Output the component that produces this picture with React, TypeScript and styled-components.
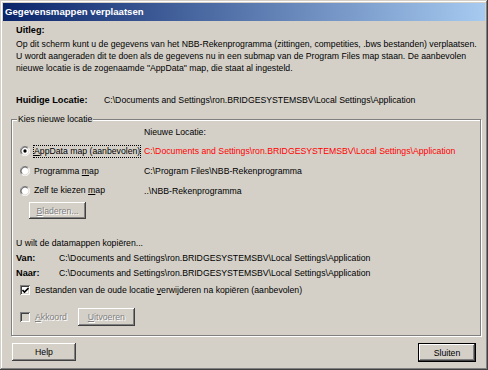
import styled, { createGlobalStyle, css } from 'styled-components'

const GlobalStyle = createGlobalStyle`
  html, body { margin: 0; padding: 0; background: #d4d0c8; }
  body {
    font-family: "Liberation Sans", Arial, sans-serif;
    font-size: 8.7px;
    color: #000;
  }
  u { text-decoration-thickness: 1px; text-underline-offset: 1px; }
`

const PATH = 'C:\\Documents and Settings\\ron.BRIDGESYSTEMSBV\\Local Settings\\Application'

const raised = css`
  box-shadow: inset -1px -1px #404040, inset 1px 1px #ffffff, inset -2px -2px #808080,
    inset 2px 2px #d4d0c8;
`

const sunken = css`
  box-shadow: inset 1px 1px #808080, inset -1px -1px #ffffff, inset 2px 2px #404040,
    inset -2px -2px #d4d0c8;
`

const Window = styled.div`
  width: 488px;
  height: 370px;
  box-sizing: border-box;
  padding: 3px;
  display: flex;
  flex-direction: column;
  background: #d4d0c8;
  box-shadow: inset -1px -1px #404040, inset 1px 1px #d4d0c8, inset -2px -2px #808080,
    inset 2px 2px #ffffff;
`

const TitleBar = styled.div`
  height: 18px;
  line-height: 18px;
  padding-left: 2px;
  background: linear-gradient(to right, #0a246a, #a6caf0);
  color: #fff;
  font-weight: bold;
  font-size: 9.6px;
  white-space: nowrap;
`

const Body = styled.div`
  display: flex;
  flex-direction: column;
  padding-top: 3px;
`

const Heading = styled.div`
  margin-left: 13px;
  line-height: 12px;
  font-weight: bold;
  font-size: 9.2px;
`

const Paragraph = styled.div`
  margin: 2px 0 0 13px;
`

const Line = styled.div`
  line-height: 12px;
  white-space: nowrap;
`

const InfoRow = styled.div<{ $label: number; $top: number; $indent: number }>`
  display: grid;
  grid-template-columns: ${(p) => p.$label}px auto;
  margin: ${(p) => p.$top}px 0 0 ${(p) => p.$indent}px;
  line-height: 12px;
  white-space: nowrap;
`

const Label = styled.span`
  font-weight: bold;
  font-size: 9.2px;
`

const Group = styled.div`
  position: relative;
  margin: 13px 4px 0 8px;
  padding: 6px 0 9px 0;
  border: 1px solid #808080;
  box-shadow: inset 1px 1px #ffffff, 1px 1px #ffffff;
`

const Legend = styled.span`
  position: absolute;
  top: -7px;
  left: 5px;
  padding: 0 1px;
  line-height: 12px;
  background: #d4d0c8;
`

const ColumnHead = styled.div`
  padding-left: 132px;
  line-height: 12px;
  margin-bottom: 3px;
`

const OptionRow = styled.div<{ $h: number }>`
  display: grid;
  grid-template-columns: 132px auto;
  align-items: center;
  height: ${(p) => p.$h}px;
  white-space: nowrap;
`

const OptionCell = styled.div`
  display: flex;
  align-items: center;
  padding-left: 8px;
  gap: 3px;

  svg {
    flex: none;
  }
`

const OptionText = styled.span<{ $focus?: boolean }>`
  padding: 1px 1px;
  line-height: 11px;
  outline: ${(p) => (p.$focus ? '1px dotted #000' : 'none')};
  outline-offset: -1px;
`

const PathText = styled.span<{ $red?: boolean }>`
  color: ${(p) => (p.$red ? '#ff0000' : '#000')};
`

const Button = styled.button<{ $w: number; $h: number; $default?: boolean }>`
  width: ${(p) => p.$w}px;
  height: ${(p) => p.$h}px;
  padding: 0;
  border: ${(p) => (p.$default ? '1px solid #000' : 'none')};
  background: #d4d0c8;
  font-family: inherit;
  font-size: 8.7px;
  color: ${(p) => (p.disabled ? '#808080' : '#000')};
  text-shadow: ${(p) => (p.disabled ? '1px 1px #ffffff' : 'none')};
  ${raised}
`

const BrowseButton = styled(Button)`
  margin: 2px 0 0 17px;
`

const PlainLine = styled.div<{ $top: number }>`
  margin-top: ${(p) => p.$top}px;
  padding-left: 4px;
  line-height: 12px;
  white-space: nowrap;
`

const CheckRow = styled.div<{ $top: number; $h: number }>`
  display: flex;
  align-items: center;
  margin-top: ${(p) => p.$top}px;
  height: ${(p) => p.$h}px;
  padding-left: 8px;
  white-space: nowrap;
`

const Box = styled.span<{ $disabled?: boolean }>`
  display: inline-flex;
  align-items: center;
  justify-content: center;
  width: 10px;
  height: 10px;
  flex: none;
  background: ${(p) => (p.$disabled ? '#d4d0c8' : '#fff')};
  ${sunken}
`

const CheckLabel = styled.span<{ $disabled?: boolean }>`
  margin-left: 5px;
  color: ${(p) => (p.$disabled ? '#808080' : '#000')};
  text-shadow: ${(p) => (p.$disabled ? '1px 1px #ffffff' : 'none')};
`

const RunButton = styled(Button)`
  margin-left: 11px;
`

const Footer = styled.div`
  display: flex;
  justify-content: space-between;
  margin-top: 7px;
  padding: 0 9px;
`

const Radio = ({ checked }: { checked?: boolean }) => (
  <svg width="10" height="10" viewBox="0 0 12 12">
    <circle cx="6" cy="6" r="5.5" fill="#fff" />
    <path d="M10 2 A5.5 5.5 0 0 0 2 10" fill="none" stroke="#808080" strokeWidth="1" />
    <path d="M9.3 2.7 A4.6 4.6 0 0 0 2.7 9.3" fill="none" stroke="#404040" strokeWidth="1" />
    <path d="M2 10 A5.5 5.5 0 0 0 10 2" fill="none" stroke="#ffffff" strokeWidth="1" />
    <path d="M2.7 9.3 A4.6 4.6 0 0 0 9.3 2.7" fill="none" stroke="#d4d0c8" strokeWidth="1" />
    {checked && <circle cx="6" cy="6" r="2" fill="#000" />}
  </svg>
)

const Check = () => (
  <svg width="7" height="7" viewBox="0 0 7 7">
    <path d="M0.5 3 L2.5 5 L6.5 1" fill="none" stroke="#000" strokeWidth="1.6" />
  </svg>
)

export default function App() {
  return (
    <>
      <GlobalStyle />
      <Window>
        <TitleBar>Gegevensmappen verplaatsen</TitleBar>
        <Body>
          <Heading>Uitleg:</Heading>
          <Paragraph>
            <Line>
              Op dit scherm kunt u de gegevens van het NBB-Rekenprogramma (zittingen, competities, .bws
              bestanden) verplaatsen.
            </Line>
            <Line>
              U wordt aangeraden dit te doen als de gegevens nu in een submap van de Program Files map
              staan. De aanbevolen
            </Line>
            <Line>nieuwe locatie is de zogenaamde "AppData" map, die staat al ingesteld.</Line>
          </Paragraph>
          <InfoRow $label={88} $top={20} $indent={13}>
            <Label>Huidige Locatie:</Label>
            <span>{PATH}</span>
          </InfoRow>

          <Group>
            <Legend>Kies nieuwe locatie</Legend>
            <ColumnHead>Nieuwe Locatie:</ColumnHead>
            <OptionRow $h={20}>
              <OptionCell>
                <Radio checked />
                <OptionText $focus>
                  <u>A</u>ppData map (aanbevolen)
                </OptionText>
              </OptionCell>
              <PathText $red>{PATH}</PathText>
            </OptionRow>
            <OptionRow $h={20}>
              <OptionCell>
                <Radio />
                <OptionText>
                  Programma <u>m</u>ap
                </OptionText>
              </OptionCell>
              <PathText>C:\Program Files\NBB-Rekenprogramma</PathText>
            </OptionRow>
            <OptionRow $h={19}>
              <OptionCell>
                <Radio />
                <OptionText>
                  Zelf te kiezen <u>m</u>ap
                </OptionText>
              </OptionCell>
              <PathText>..\NBB-Rekenprogramma</PathText>
            </OptionRow>
            <BrowseButton $w={57} $h={17} disabled>
              <u>B</u>laderen...
            </BrowseButton>

            <PlainLine $top={18}>U wilt de datamappen kopiëren...</PlainLine>
            <InfoRow $label={43} $top={3} $indent={4}>
              <Label>Van:</Label>
              <span>{PATH}</span>
            </InfoRow>
            <InfoRow $label={43} $top={3} $indent={4}>
              <Label>Naar:</Label>
              <span>{PATH}</span>
            </InfoRow>
            <CheckRow $top={4} $h={14}>
              <Box>
                <Check />
              </Box>
              <CheckLabel>
                Bestanden van de oude locatie <u>v</u>erwijderen na kopiëren (aanbevolen)
              </CheckLabel>
            </CheckRow>
            <CheckRow $top={11} $h={18}>
              <Box $disabled />
              <CheckLabel $disabled>
                <u>A</u>kkoord
              </CheckLabel>
              <RunButton $w={57} $h={18} disabled>
                <u>U</u>itvoeren
              </RunButton>
            </CheckRow>
          </Group>

          <Footer>
            <Button $w={64} $h={18}>
              Help
            </Button>
            <Button $w={58} $h={19} $default>
              Sluiten
            </Button>
          </Footer>
        </Body>
      </Window>
    </>
  )
}
